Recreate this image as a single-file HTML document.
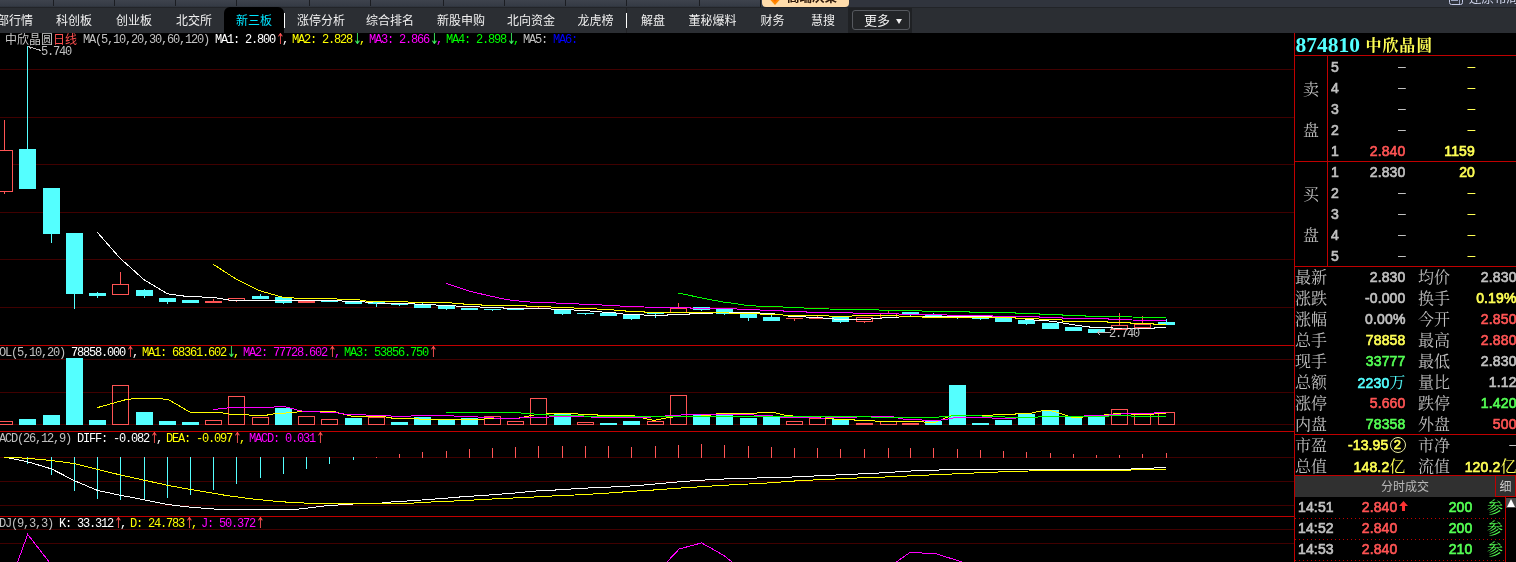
<!DOCTYPE html><html lang="zh-CN"><head><meta charset="utf-8"><title>874810 中欣晶圆</title><style>
html,body{margin:0;padding:0;background:#000;}
body{width:1516px;height:562px;overflow:hidden;position:relative;font-family:"Liberation Sans","Noto Sans CJK SC",sans-serif;}
#wrap{will-change:transform;position:absolute;left:0;top:0;width:1516px;height:562px;overflow:hidden;background:#000;}
.abs{position:absolute;white-space:nowrap;}
#topstrip{position:absolute;left:0;top:0;width:1516px;height:7px;background:#30343d;}
#darkrow{position:absolute;left:0;top:7px;width:1516px;height:1px;background:#222428;}
#topstrip .l{position:absolute;left:0;top:0;width:762px;height:7px;background:linear-gradient(#3e434d,#353b45 85%,#2c3038);}
#topstrip .sep{position:absolute;top:0;width:1px;height:6px;background:#1b1d22;}
#topstrip .btn{position:absolute;left:762px;top:-14px;width:87px;height:21px;background:#ffdcab;border-radius:0 0 4px 4px;color:#111;font-size:13px;line-height:18px;overflow:hidden;}
#tabbar{position:absolute;left:0;top:7px;width:1516px;height:26px;background:#2b2e33;}
.tab{position:absolute;top:7px;height:14px;line-height:14px;font-size:12px;color:#f0f0f0;white-space:nowrap;font-family:"Liberation Sans","Noto Sans CJK SC",sans-serif;}
#acttab{position:absolute;left:224px;top:0px;width:60px;height:26px;background:#000;border-radius:6px 6px 0 0;}
.vsep{position:absolute;top:6px;width:1px;height:15px;background:#fff;}
.mono{font-family:"Liberation Mono","Noto Sans CJK SC",monospace;font-size:12px;letter-spacing:-1.2px;line-height:12px;height:12px;color:#c0c0c0;}
.ss{font-family:"Liberation Mono","Noto Sans CJK SC",monospace;font-size:12px;line-height:12px;letter-spacing:0;}
.arw{width:13px;height:14px;text-align:center;font:15px/14px 'DejaVu Sans',sans-serif;overflow:visible;transform:scaleX(0.7);}
.up{color:#ff3232;} .dn{color:#00e600;}
.ar{display:inline-block;width:5px;letter-spacing:0;font-size:10px;overflow:visible;text-align:center;}
#rp{position:absolute;left:1295px;top:33px;width:221px;height:529px;background:#000;overflow:hidden;}
.rl{position:absolute;left:0;height:1px;width:221px;background:#c00000;}
.num{position:absolute;font-family:"Liberation Sans",sans-serif;font-weight:normal;-webkit-text-stroke:0.65px currentColor;letter-spacing:0.15px;font-size:14px;line-height:16px;height:16px;white-space:nowrap;}
.lab{position:absolute;font-family:"Noto Serif CJK SC","Noto Sans CJK SC",serif;font-size:16px;line-height:16px;height:16px;color:#c0c0c0;white-space:nowrap;font-weight:400;}
.w{color:#c0c0c0;} .y{color:#ffff54;} .r{color:#ff5454;} .g{color:#54ff54;} .c{color:#54ffff;}
.ds{-webkit-text-stroke:0;position:relative;top:-1px;left:0.5px}.cj{-webkit-text-stroke:0;font-family:"Noto Serif CJK SC",serif;font-weight:400;font-size:16px;}.circ{display:inline-block;box-sizing:border-box;width:16px;height:16px;border:1.5px solid #e8e8a0;border-radius:50%;text-align:center;line-height:13px;font-size:13px;vertical-align:top;margin-left:1px}</style></head><body><div id="wrap">
<div id="topstrip"><div class="l"></div>
<div class="sep" style="left:53px"></div>
<div class="sep" style="left:114px"></div>
<div class="sep" style="left:175px"></div>
<div class="sep" style="left:236px"></div>
<div class="sep" style="left:309px"></div>
<div class="sep" style="left:370px"></div>
<div class="sep" style="left:443px"></div>
<div class="sep" style="left:504px"></div>
<div class="sep" style="left:565px"></div>
<div class="sep" style="left:626px"></div>
<div class="sep" style="left:699px"></div>
<div class="btn"><svg class="abs" style="left:8px;top:7.5px" width="10" height="11" viewBox="0 0 10 11"><path d="M5 0L10 5.5L5 11L0 5.5Z" fill="#ff8a00"/><path d="M5 3L7.5 5.5L5 8L2.5 5.5Z" fill="#ff6a00"/></svg><span style="position:absolute;left:25px;top:6px;font-weight:bold;font-size:12.5px;line-height:13px;color:#2a1508">高端决策</span></div>
<div class="abs" style="left:760px;top:0;width:1px;height:7px;background:#15171a"></div>
<div class="abs" style="left:1449px;top:-8.5px;width:13.5px;height:13.8px;border:1.8px solid #c4cbe6;border-radius:2.5px;box-sizing:border-box"></div><div class="abs" style="left:1451px;top:0;width:7px;height:1.2px;background:#9aa2bd"></div><div class="abs" style="left:1459px;top:0;width:1.3px;height:4px;background:#9aa2bd"></div><div class="abs" style="left:1469px;top:-6.6px;font-size:12.5px;line-height:13px;color:#d4daf0">还原布局</div>
</div>
<div id="tabbar"><div id="darkrow" style="top:0"></div><div id="acttab"></div>
<div class="tab" style="left:-15px">全部行情</div>
<div class="tab" style="left:56px">科创板</div>
<div class="tab" style="left:116px">创业板</div>
<div class="tab" style="left:176px">北交所</div>
<div class="tab" style="left:297px">涨停分析</div>
<div class="tab" style="left:366px">综合排名</div>
<div class="tab" style="left:437px">新股申购</div>
<div class="tab" style="left:507px">北向资金</div>
<div class="tab" style="left:577.5px">龙虎榜</div>
<div class="tab" style="left:641px">解盘</div>
<div class="tab" style="left:688.5px">董秘爆料</div>
<div class="tab" style="left:760.5px">财务</div>
<div class="tab" style="left:811px">慧搜</div>
<div class="tab" style="left:236px;color:#00e5ff">新三板</div>
<div class="abs" style="left:626px;top:1px;width:1px;height:25px;background:#222326"></div><div class="vsep" style="left:284px"></div><div class="vsep" style="left:626px"></div>
<div class="abs" style="left:848px;top:1px;width:64px;height:25px;background:#1f2124"></div>
<div class="abs" style="left:852px;top:3px;width:58px;height:20px;box-sizing:border-box;border:1px solid #55585e;border-radius:3px;background:#232528"></div>
<div class="tab" style="left:864px;font-size:13px;top:7px">更多</div><div class="abs" style="left:896px;top:12px;width:0;height:0;border-left:3.5px solid transparent;border-right:3.5px solid transparent;border-top:5px solid #f0f0f0"></div>
</div>
<div class="abs" style="left:0;top:0;width:1295px;height:562px"><svg id="chart" width="1295" height="562" viewBox="0 0 1295 562" shape-rendering="crispEdges">
<rect x="0" y="69" width="1294" height="1" fill="#400000"/>
<rect x="0" y="117" width="1294" height="1" fill="#400000"/>
<rect x="0" y="164" width="1294" height="1" fill="#400000"/>
<rect x="0" y="212" width="1294" height="1" fill="#400000"/>
<rect x="0" y="259" width="1294" height="1" fill="#400000"/>
<rect x="0" y="307" width="1294" height="1" fill="#400000"/>
<rect x="0" y="359" width="1294" height="1" fill="#400000"/>
<rect x="0" y="392" width="1294" height="1" fill="#400000"/>
<rect x="0" y="424" width="1294" height="1" fill="#400000"/>
<rect x="0" y="457" width="1294" height="1" fill="#400000"/>
<rect x="0" y="481" width="1294" height="1" fill="#400000"/>
<rect x="0" y="505" width="1294" height="1" fill="#400000"/>
<rect x="0" y="529" width="1294" height="1" fill="#400000"/>
<rect x="0" y="543" width="1294" height="1" fill="#400000"/>
<rect x="0" y="345" width="1294" height="1" fill="#c00000"/>
<rect x="0" y="431" width="1294" height="1" fill="#c00000"/>
<rect x="0" y="516" width="1294" height="1" fill="#c00000"/>
<rect x="4" y="120" width="1" height="30" fill="#ff5454"/>
<rect x="4" y="192" width="1" height="2" fill="#ff5454"/>
<rect x="-3.5" y="150.5" width="16" height="41" fill="#000" stroke="#ff5454" stroke-width="1"/>
<rect x="27" y="46" width="1" height="143" fill="#54ffff"/>
<rect x="19" y="149" width="17" height="40" fill="#54ffff"/>
<rect x="51" y="188" width="1" height="55" fill="#54ffff"/>
<rect x="43" y="188" width="17" height="46" fill="#54ffff"/>
<rect x="74" y="233" width="1" height="76" fill="#54ffff"/>
<rect x="66" y="233" width="17" height="61" fill="#54ffff"/>
<rect x="97" y="292" width="1" height="6" fill="#54ffff"/>
<rect x="89" y="293" width="17" height="3" fill="#54ffff"/>
<rect x="120" y="272" width="1" height="12" fill="#ff5454"/>
<rect x="112.5" y="284.5" width="16" height="10" fill="#000" stroke="#ff5454" stroke-width="1"/>
<rect x="144" y="289" width="1" height="9" fill="#54ffff"/>
<rect x="136" y="290" width="17" height="6" fill="#54ffff"/>
<rect x="167" y="298" width="1" height="6" fill="#54ffff"/>
<rect x="159" y="298" width="17" height="4" fill="#54ffff"/>
<rect x="182" y="300" width="17" height="3" fill="#54ffff"/>
<rect x="213" y="299" width="1" height="4" fill="#ff5454"/>
<rect x="205" y="301" width="17" height="2" fill="#ff5454"/>
<rect x="236" y="301" width="1" height="1" fill="#ff5454"/>
<rect x="228.5" y="298.5" width="16" height="2" fill="#000" stroke="#ff5454" stroke-width="1"/>
<rect x="260" y="294" width="1" height="5" fill="#54ffff"/>
<rect x="252" y="296" width="17" height="3" fill="#54ffff"/>
<rect x="283" y="297" width="1" height="7" fill="#54ffff"/>
<rect x="275" y="297" width="17" height="6" fill="#54ffff"/>
<rect x="298" y="301" width="17" height="2" fill="#ff5454"/>
<rect x="321" y="301" width="17" height="1" fill="#54ffff"/>
<rect x="345" y="301" width="17" height="3" fill="#54ffff"/>
<rect x="376" y="302" width="1" height="5" fill="#54ffff"/>
<rect x="368" y="302" width="17" height="2" fill="#54ffff"/>
<rect x="399" y="303" width="1" height="3" fill="#54ffff"/>
<rect x="391" y="303" width="17" height="2" fill="#54ffff"/>
<rect x="422" y="302" width="1" height="6" fill="#54ffff"/>
<rect x="414" y="304" width="17" height="4" fill="#54ffff"/>
<rect x="446" y="306" width="1" height="4" fill="#54ffff"/>
<rect x="438" y="306" width="17" height="3" fill="#54ffff"/>
<rect x="461" y="308" width="17" height="2" fill="#54ffff"/>
<rect x="492" y="309" width="1" height="2" fill="#54ffff"/>
<rect x="484" y="309" width="17" height="1" fill="#54ffff"/>
<rect x="507" y="309" width="17" height="1" fill="#54ffff"/>
<rect x="538" y="307" width="1" height="1" fill="#ff5454"/>
<rect x="562" y="310" width="1" height="5" fill="#54ffff"/>
<rect x="554" y="310" width="17" height="4" fill="#54ffff"/>
<rect x="585" y="313" width="1" height="2" fill="#54ffff"/>
<rect x="577" y="313" width="17" height="1" fill="#54ffff"/>
<rect x="600" y="313" width="17" height="3" fill="#54ffff"/>
<rect x="631" y="315" width="1" height="5" fill="#54ffff"/>
<rect x="623" y="315" width="17" height="4" fill="#54ffff"/>
<rect x="655" y="312" width="1" height="6" fill="#54ffff"/>
<rect x="647" y="312" width="17" height="2" fill="#54ffff"/>
<rect x="678" y="303" width="1" height="5" fill="#ff5454"/>
<rect x="670.5" y="308.5" width="16" height="4" fill="#000" stroke="#ff5454" stroke-width="1"/>
<rect x="701" y="307" width="1" height="4" fill="#54ffff"/>
<rect x="693" y="307" width="17" height="3" fill="#54ffff"/>
<rect x="724" y="309" width="1" height="6" fill="#54ffff"/>
<rect x="716" y="309" width="17" height="5" fill="#54ffff"/>
<rect x="748" y="314" width="1" height="7" fill="#54ffff"/>
<rect x="740" y="314" width="17" height="4" fill="#54ffff"/>
<rect x="771" y="315" width="1" height="6" fill="#54ffff"/>
<rect x="763" y="317" width="17" height="4" fill="#54ffff"/>
<rect x="794" y="318" width="1" height="3" fill="#ff5454"/>
<rect x="786" y="318" width="17" height="1" fill="#ff5454"/>
<rect x="817" y="316" width="1" height="3" fill="#ff5454"/>
<rect x="809" y="318" width="17" height="1" fill="#ff5454"/>
<rect x="840" y="317" width="1" height="6" fill="#54ffff"/>
<rect x="832" y="317" width="17" height="5" fill="#54ffff"/>
<rect x="864" y="322" width="1" height="1" fill="#ff5454"/>
<rect x="856.5" y="317.5" width="16" height="4" fill="#000" stroke="#ff5454" stroke-width="1"/>
<rect x="888" y="311" width="1" height="2" fill="#ff5454"/>
<rect x="880.5" y="313.5" width="16" height="4" fill="#000" stroke="#ff5454" stroke-width="1"/>
<rect x="910" y="312" width="1" height="4" fill="#54ffff"/>
<rect x="902" y="312" width="17" height="2" fill="#54ffff"/>
<rect x="933" y="313" width="1" height="3" fill="#54ffff"/>
<rect x="925" y="314" width="17" height="2" fill="#54ffff"/>
<rect x="957" y="317" width="1" height="2" fill="#54ffff"/>
<rect x="949" y="317" width="17" height="1" fill="#54ffff"/>
<rect x="980" y="318" width="1" height="2" fill="#54ffff"/>
<rect x="972" y="318" width="17" height="1" fill="#54ffff"/>
<rect x="995" y="318" width="17" height="4" fill="#54ffff"/>
<rect x="1026" y="320" width="1" height="5" fill="#54ffff"/>
<rect x="1018" y="320" width="17" height="4" fill="#54ffff"/>
<rect x="1042" y="323" width="17" height="6" fill="#54ffff"/>
<rect x="1065" y="327" width="17" height="4" fill="#54ffff"/>
<rect x="1088" y="329" width="17" height="4" fill="#54ffff"/>
<rect x="1119" y="313" width="1" height="12" fill="#ff5454"/>
<rect x="1111.5" y="325.5" width="16" height="4" fill="#000" stroke="#ff5454" stroke-width="1"/>
<rect x="1142" y="316" width="1" height="8" fill="#ff5454"/>
<rect x="1134.5" y="324.5" width="16" height="3" fill="#000" stroke="#ff5454" stroke-width="1"/>
<rect x="1166" y="319" width="1" height="6" fill="#54ffff"/>
<rect x="1158" y="322" width="17" height="3" fill="#54ffff"/>
<polyline points="97.0,232.0 120.4,258.6 144.2,279.8 167.5,293.8 190.0,296.9 201.6,297.0 216.8,297.9 228.4,299.9 233.7,300.8 341.0,300.8 346.0,301.8 363.7,301.8 372.6,303.0 404.7,303.1 417.0,304.2 434.7,304.7 438.3,305.8 455.2,305.8 458.8,306.7 480.0,307.0 481.0,307.7 503.3,307.7 504.2,308.6 550.5,308.6 551.4,309.5 573.6,309.5 574.5,310.6 588.8,310.8 591.5,311.5 601.2,311.8 603.9,312.6 613.7,312.7 626.2,314.5 643.0,314.7 645.0,315.6 666.9,315.6 667.8,314.5 689.2,314.5 690.0,313.6 712.3,313.6 713.2,312.8 759.5,312.8 760.4,313.8 774.7,313.8 775.6,314.5 782.0,314.7 790.7,316.7 805.8,316.7 806.7,317.7 822.8,317.9 824.5,318.8 833.4,318.8 835.2,319.5 870.0,319.5 871.7,318.8 880.6,318.8 882.4,317.7 898.4,317.7 899.3,316.7 922.0,316.5 946.0,316.5 992.0,316.5 1015.0,318.0 1033.9,320.0 1053.0,321.3 1062.6,322.9 1076.0,325.2 1093.2,327.5 1110.4,327.5 1116.1,328.6 1153.4,328.6 1155.4,327.5 1165.9,327.5" fill="none" stroke="#ffffff" stroke-width="1"/>
<polyline points="213.2,264.3 235.5,278.7 259.5,290.6 281.8,297.0 292.5,297.4 295.0,298.3 335.0,298.3 337.0,299.0 346.8,299.3 363.7,300.2 366.4,301.3 406.5,301.7 411.6,302.8 451.6,302.8 452.5,303.5 463.2,303.6 464.0,304.5 481.0,304.5 482.0,305.6 526.4,305.6 527.3,306.7 550.5,306.7 551.4,307.7 573.6,307.7 574.5,308.6 596.8,308.6 597.7,309.5 613.7,309.9 614.6,310.6 625.3,310.8 626.2,311.7 644.0,311.7 644.9,312.6 663.4,312.8 664.2,312.0 712.3,312.0 713.2,312.8 737.0,313.1 759.5,313.5 760.4,314.2 782.7,314.5 783.6,315.6 828.0,315.6 829.9,316.7 851.2,316.7 853.0,315.6 898.4,315.6 899.3,316.5 922.0,316.5 923.0,317.4 1015.0,317.4 1015.7,318.5 1038.7,318.5 1039.6,319.6 1061.6,319.8 1062.6,321.0 1084.6,321.0 1085.5,321.9 1107.5,321.9 1108.5,322.9 1130.5,322.9 1131.4,323.8 1153.4,323.8 1154.4,324.8 1165.9,324.8" fill="none" stroke="#ffff00" stroke-width="1"/>
<polyline points="446.0,283.2 471.2,291.7 506.9,299.7 526.8,301.9 551.4,302.8 573.6,303.8 596.8,304.7 620.0,306.0 644.0,307.0 670.0,307.4 690.0,307.4 691.0,308.3 736.4,308.3 737.3,309.2 759.5,309.5 760.4,310.4 782.7,310.4 783.6,311.3 805.8,311.3 806.7,312.2 852.1,312.2 853.0,313.1 898.4,313.1 899.3,314.2 946.0,314.2 947.0,315.2 991.8,315.2 992.8,316.2 1038.8,316.5 1039.6,317.3 1061.6,317.3 1062.6,318.1 1107.5,318.1 1108.5,319.0 1130.5,319.0 1131.4,320.0 1165.9,320.4" fill="none" stroke="#ff00ff" stroke-width="1"/>
<polyline points="678.1,293.0 701.0,297.8 721.2,301.7 737.3,303.9 745.3,305.3 760.4,306.3 782.7,307.0 805.8,308.1 829.0,309.0 876.2,309.9 899.3,310.8 922.0,310.8 923.0,311.6 969.0,311.6 970.0,312.4 1015.0,312.4 1015.7,313.3 1038.7,313.3 1039.6,314.2 1061.6,314.2 1062.6,315.0 1084.6,315.0 1085.5,316.0 1130.5,316.0 1131.4,317.0 1165.9,317.3" fill="none" stroke="#00ff00" stroke-width="1"/>
<rect x="-3.5" y="421.5" width="16" height="3" fill="none" stroke="#ff5454" stroke-width="1"/>
<rect x="19" y="419" width="17" height="6" fill="#54ffff"/>
<rect x="43" y="415" width="17" height="10" fill="#54ffff"/>
<rect x="66" y="358" width="17" height="67" fill="#54ffff"/>
<rect x="89" y="420" width="17" height="5" fill="#54ffff"/>
<rect x="112.5" y="385.5" width="16" height="39" fill="none" stroke="#ff5454" stroke-width="1"/>
<rect x="136" y="412" width="17" height="13" fill="#54ffff"/>
<rect x="159" y="421" width="17" height="4" fill="#54ffff"/>
<rect x="182" y="422" width="17" height="3" fill="#54ffff"/>
<rect x="205.5" y="420.5" width="16" height="4" fill="none" stroke="#ff5454" stroke-width="1"/>
<rect x="228.5" y="396.5" width="16" height="28" fill="none" stroke="#ff5454" stroke-width="1"/>
<rect x="252.5" y="417.5" width="16" height="7" fill="none" stroke="#ff5454" stroke-width="1"/>
<rect x="275" y="408" width="17" height="17" fill="#54ffff"/>
<rect x="298.5" y="416.5" width="16" height="8" fill="none" stroke="#ff5454" stroke-width="1"/>
<rect x="321.5" y="419.5" width="16" height="5" fill="none" stroke="#ff5454" stroke-width="1"/>
<rect x="345" y="418" width="17" height="7" fill="#54ffff"/>
<rect x="368.5" y="417.5" width="16" height="7" fill="none" stroke="#ff5454" stroke-width="1"/>
<rect x="391" y="422" width="17" height="3" fill="#54ffff"/>
<rect x="414" y="417" width="17" height="8" fill="#54ffff"/>
<rect x="438" y="420" width="17" height="5" fill="#54ffff"/>
<rect x="461" y="418" width="17" height="7" fill="#54ffff"/>
<rect x="484.5" y="416.5" width="16" height="8" fill="none" stroke="#ff5454" stroke-width="1"/>
<rect x="507.5" y="421.5" width="16" height="3" fill="none" stroke="#ff5454" stroke-width="1"/>
<rect x="530.5" y="398.5" width="16" height="26" fill="none" stroke="#ff5454" stroke-width="1"/>
<rect x="554" y="414" width="17" height="11" fill="#54ffff"/>
<rect x="577.5" y="422.5" width="16" height="2" fill="none" stroke="#ff5454" stroke-width="1"/>
<rect x="600" y="423" width="17" height="2" fill="#54ffff"/>
<rect x="623" y="421" width="17" height="4" fill="#54ffff"/>
<rect x="647.5" y="421.5" width="16" height="3" fill="none" stroke="#ff5454" stroke-width="1"/>
<rect x="670.5" y="395.5" width="16" height="29" fill="none" stroke="#ff5454" stroke-width="1"/>
<rect x="693" y="415" width="17" height="10" fill="#54ffff"/>
<rect x="716" y="414" width="17" height="11" fill="#54ffff"/>
<rect x="740" y="418" width="17" height="7" fill="#54ffff"/>
<rect x="763" y="416" width="17" height="9" fill="#54ffff"/>
<rect x="786.5" y="421.5" width="16" height="3" fill="none" stroke="#ff5454" stroke-width="1"/>
<rect x="809.5" y="418.5" width="16" height="6" fill="none" stroke="#ff5454" stroke-width="1"/>
<rect x="832" y="419" width="17" height="6" fill="#54ffff"/>
<rect x="856" y="423" width="17" height="2" fill="#ff5454"/>
<rect x="880.5" y="421.5" width="16" height="3" fill="none" stroke="#ff5454" stroke-width="1"/>
<rect x="902" y="423" width="17" height="2" fill="#ff5454"/>
<rect x="925" y="421" width="17" height="4" fill="#54ffff"/>
<rect x="949" y="385" width="17" height="40" fill="#54ffff"/>
<rect x="972" y="423" width="17" height="2" fill="#54ffff"/>
<rect x="995" y="420" width="17" height="5" fill="#54ffff"/>
<rect x="1018" y="414" width="17" height="11" fill="#54ffff"/>
<rect x="1042" y="410" width="17" height="15" fill="#54ffff"/>
<rect x="1065" y="416" width="17" height="9" fill="#54ffff"/>
<rect x="1088" y="416" width="17" height="9" fill="#54ffff"/>
<rect x="1111.5" y="409.5" width="16" height="15" fill="none" stroke="#ff5454" stroke-width="1"/>
<rect x="1134.5" y="413.5" width="16" height="11" fill="none" stroke="#ff5454" stroke-width="1"/>
<rect x="1158.5" y="412.5" width="16" height="12" fill="none" stroke="#ff5454" stroke-width="1"/>
<polyline points="97.0,407.7 126.7,399.4 138.5,398.4 155.4,398.4 168.2,399.4 190.0,412.2 218.7,412.2 229.6,414.2 245.4,414.2 250.3,415.4 265.2,415.4 277.0,413.4 290.0,412.8 304.8,411.2 332.5,411.2 351.3,416.2 381.0,416.2 394.9,418.6 412.7,418.6 428.5,419.6 480.0,419.6 489.9,418.2 517.6,418.2 535.4,414.8 551.2,413.6 573.0,413.6 580.9,414.3 596.8,414.5 597.8,415.5 633.4,415.5 643.3,418.1 654.2,420.5 665.0,418.1 677.0,416.5 706.7,415.9 718.5,413.5 754.2,413.5 762.0,412.2 773.0,412.2 785.8,415.5 805.6,416.9 822.4,418.1 835.3,419.1 853.0,419.5 857.0,420.9 874.9,421.0 880.0,421.3 922.8,421.3 924.9,422.3 935.4,422.3 951.3,415.4 992.4,415.4 994.5,414.3 1014.6,414.3 1017.8,413.3 1030.4,413.3 1038.9,411.2 1049.4,410.1 1060.0,413.3 1072.6,417.5 1081.0,417.5 1085.3,416.4 1102.2,415.4 1106.4,414.3 1112.7,414.3 1114.9,413.3 1129.6,413.3 1131.7,414.3 1152.8,414.3 1155.0,413.3 1165.5,413.3" fill="none" stroke="#ffff00" stroke-width="1"/>
<polyline points="212.7,409.7 219.7,408.7 229.6,407.7 271.0,407.7 275.0,406.7 285.0,406.7 294.9,409.3 297.9,410.3 305.8,411.8 332.5,412.2 349.4,414.8 382.0,415.2 392.9,416.2 410.7,416.2 412.7,415.2 452.3,415.2 454.3,416.2 483.0,417.2 502.7,418.6 525.5,417.8 547.3,417.2 555.2,416.2 579.0,416.2 590.0,416.9 596.8,417.5 643.3,417.5 667.0,415.9 689.8,414.5 766.0,415.1 783.8,417.5 805.6,417.5 822.4,418.1 876.0,416.4 891.0,416.4 899.6,418.5 908.0,419.6 921.7,419.6 922.8,420.7 935.4,420.7 948.0,419.0 954.4,417.7 991.4,417.7 992.4,418.5 1014.6,418.5 1017.8,417.5 1036.8,417.5 1038.9,416.4 1083.0,416.4 1085.3,415.4 1108.5,415.4 1110.6,414.3 1131.7,413.7 1152.8,413.7 1155.0,412.8 1165.5,412.8" fill="none" stroke="#ff00ff" stroke-width="1"/>
<polyline points="446.3,412.6 520.6,412.6 522.5,413.6 532.4,413.6 535.4,414.6 590.0,416.2 620.0,416.9 870.0,416.9 876.0,417.5 937.5,417.5 940.7,416.4 968.0,415.4 991.4,416.4 1015.6,417.5 1036.8,417.5 1038.9,416.4 1108.5,416.4 1110.6,415.4 1129.6,415.4 1131.7,416.4 1165.5,416.4" fill="none" stroke="#00ff00" stroke-width="1"/>
<rect x="27" y="457" width="1" height="7" fill="#54ffff"/>
<rect x="51" y="457" width="1" height="18" fill="#54ffff"/>
<rect x="74" y="457" width="1" height="34" fill="#54ffff"/>
<rect x="97" y="457" width="1" height="42" fill="#54ffff"/>
<rect x="120" y="457" width="1" height="43" fill="#54ffff"/>
<rect x="144" y="457" width="1" height="43" fill="#54ffff"/>
<rect x="167" y="457" width="1" height="41" fill="#54ffff"/>
<rect x="190" y="457" width="1" height="38" fill="#54ffff"/>
<rect x="213" y="457" width="1" height="33" fill="#54ffff"/>
<rect x="236" y="457" width="1" height="27" fill="#54ffff"/>
<rect x="260" y="457" width="1" height="21" fill="#54ffff"/>
<rect x="283" y="457" width="1" height="17" fill="#54ffff"/>
<rect x="306" y="457" width="1" height="12" fill="#54ffff"/>
<rect x="329" y="457" width="1" height="7" fill="#54ffff"/>
<rect x="353" y="457" width="1" height="3" fill="#54ffff"/>
<rect x="376" y="457" width="1" height="1" fill="#ff5454"/>
<rect x="399" y="454" width="1" height="4" fill="#ff5454"/>
<rect x="422" y="452" width="1" height="6" fill="#ff5454"/>
<rect x="446" y="451" width="1" height="7" fill="#ff5454"/>
<rect x="469" y="449" width="1" height="9" fill="#ff5454"/>
<rect x="492" y="448" width="1" height="10" fill="#ff5454"/>
<rect x="515" y="447" width="1" height="11" fill="#ff5454"/>
<rect x="538" y="446" width="1" height="12" fill="#ff5454"/>
<rect x="562" y="446" width="1" height="12" fill="#ff5454"/>
<rect x="585" y="446" width="1" height="12" fill="#ff5454"/>
<rect x="608" y="446" width="1" height="12" fill="#ff5454"/>
<rect x="631" y="447" width="1" height="11" fill="#ff5454"/>
<rect x="655" y="446" width="1" height="12" fill="#ff5454"/>
<rect x="678" y="445" width="1" height="13" fill="#ff5454"/>
<rect x="701" y="444" width="1" height="14" fill="#ff5454"/>
<rect x="724" y="445" width="1" height="13" fill="#ff5454"/>
<rect x="748" y="446" width="1" height="12" fill="#ff5454"/>
<rect x="771" y="447" width="1" height="11" fill="#ff5454"/>
<rect x="794" y="448" width="1" height="10" fill="#ff5454"/>
<rect x="817" y="448" width="1" height="10" fill="#ff5454"/>
<rect x="840" y="449" width="1" height="9" fill="#ff5454"/>
<rect x="864" y="449" width="1" height="9" fill="#ff5454"/>
<rect x="888" y="448" width="1" height="10" fill="#ff5454"/>
<rect x="910" y="448" width="1" height="10" fill="#ff5454"/>
<rect x="933" y="448" width="1" height="10" fill="#ff5454"/>
<rect x="957" y="449" width="1" height="9" fill="#ff5454"/>
<rect x="980" y="450" width="1" height="8" fill="#ff5454"/>
<rect x="1003" y="451" width="1" height="7" fill="#ff5454"/>
<rect x="1026" y="452" width="1" height="6" fill="#ff5454"/>
<rect x="1050" y="453" width="1" height="5" fill="#ff5454"/>
<rect x="1073" y="454" width="1" height="4" fill="#ff5454"/>
<rect x="1096" y="455" width="1" height="3" fill="#ff5454"/>
<rect x="1119" y="455" width="1" height="3" fill="#ff5454"/>
<rect x="1142" y="454" width="1" height="4" fill="#ff5454"/>
<rect x="1166" y="453" width="1" height="5" fill="#ff5454"/>
<polyline points="4.0,457.0 27.7,461.8 51.5,468.9 74.7,480.8 97.6,490.5 120.6,495.3 144.3,499.8 167.5,504.5 190.5,507.2 213.7,509.0 236.7,509.5 295.0,509.5 310.8,507.7 324.0,506.0 341.0,504.8 358.0,503.7 382.0,503.0 395.0,501.6 411.0,500.8 428.2,499.5 452.0,497.7 463.9,496.6 481.0,495.6 498.2,494.3 516.6,492.9 533.8,491.1 550.9,490.3 568.0,489.2 580.0,488.5 597.0,487.5 619.6,486.7 636.7,485.6 648.6,484.6 660.5,483.5 672.3,482.4 684.2,481.4 696.0,480.6 713.2,479.5 735.7,478.5 783.2,477.4 805.6,476.4 829.3,475.3 851.8,474.3 875.5,473.2 892.7,472.2 904.5,471.4 921.7,470.3 969.2,469.5 1130.5,469.5 1131.5,468.5 1153.5,468.5 1154.5,467.5 1165.9,467.5" fill="none" stroke="#ffffff" stroke-width="1"/>
<polyline points="4.0,457.0 27.7,458.3 51.5,460.5 74.7,463.6 97.6,469.4 120.6,475.0 144.3,480.2 167.5,485.3 190.5,489.5 200.0,491.0 226.4,495.5 252.8,499.0 279.0,501.6 295.0,502.6 318.7,503.7 371.5,503.7 374.0,503.2 411.0,503.2 434.8,501.8 458.6,500.8 479.7,499.7 503.4,498.4 527.2,497.4 545.6,496.3 574.7,495.0 580.0,494.6 597.0,493.8 614.3,492.7 626.2,491.7 643.3,490.6 660.5,489.6 672.3,488.5 689.5,487.5 706.6,486.4 718.5,485.6 735.7,484.6 759.4,483.5 776.6,482.4 788.4,481.4 805.6,480.3 829.3,479.3 851.8,478.2 875.5,477.4 899.3,476.4 921.7,475.3 945.4,474.3 969.2,473.2 991.6,472.3 1016.5,471.2 1060.9,470.5 1130.5,470.5 1131.5,469.5 1165.9,469.5" fill="none" stroke="#ffff00" stroke-width="1"/>
<polyline points="17.2,563.0 27.7,534.4 50.0,563.0" fill="none" stroke="#ff00ff" stroke-width="1"/>
<polyline points="666.0,563.0 679.2,549.0 701.6,542.9 724.0,555.5 733.2,563.0" fill="none" stroke="#ff00ff" stroke-width="1"/>
<polyline points="895.0,563.0 910.0,552.4 920.6,552.4 923.2,553.4 935.0,553.4 965.4,563.0" fill="none" stroke="#ff00ff" stroke-width="1"/>
<path d="M28.5 46.5 L31.5 49.5 M28.5 46.5 L41 50.5" stroke="#c0c0c0" fill="none"/>
<path d="M1097.5 332.5 H1111 M1097.5 332.5 l3 -3 M1097.5 332.5 l3 3" stroke="#c0c0c0" fill="none"/>
<rect x="1294" y="33" width="1" height="529" fill="#c00000"/>
</svg></div>
<div class="abs" style="left:5px;top:33.5px;font:12px/12px 'Liberation Sans','Noto Sans CJK SC',sans-serif;color:#c8c8c8;font-weight:400">中欣晶圆<span style="color:#ff5050">日线</span></div>
<div class="abs mono" style="left:83px;top:33.5px;color:#c0c0c0;">MA(5,10,20,30,60,120)</div>
<div class="abs mono" style="left:215px;top:33.5px;color:#ffffff;">MA1: 2.800</div>
<div class="abs arw" style="left:274px;top:32.0px;color:#ff5454">↑</div>
<div class="abs mono" style="left:282px;top:33.5px;color:#ffffff;">,</div>
<div class="abs mono" style="left:292px;top:33.5px;color:#ffff00;">MA2: 2.828</div>
<div class="abs arw" style="left:351px;top:32.0px;color:#3cf060">↓</div>
<div class="abs mono" style="left:359px;top:33.5px;color:#ffff00;">,</div>
<div class="abs mono" style="left:369px;top:33.5px;color:#ff00ff;">MA3: 2.866</div>
<div class="abs arw" style="left:428px;top:32.0px;color:#3cf060">↓</div>
<div class="abs mono" style="left:436px;top:33.5px;color:#ff00ff;">,</div>
<div class="abs mono" style="left:446px;top:33.5px;color:#00ff00;">MA4: 2.898</div>
<div class="abs arw" style="left:505px;top:32.0px;color:#3cf060">↓</div>
<div class="abs mono" style="left:513px;top:33.5px;color:#00ff00;">,</div>
<div class="abs mono" style="left:523px;top:33.5px;color:#c0c0c0;">MA5:</div>
<div class="abs mono" style="left:553px;top:33.5px;color:#0000ff;">MA6:</div>
<div class="abs mono" style="left:41px;top:46px;color:#c0c0c0;">5.740</div>
<div class="abs mono" style="left:1109px;top:328px;color:#c0c0c0;">2.740</div>
<div class="abs mono" style="left:-7px;top:346.5px;color:#c0c0c0;">VOL(5,10,20)</div>
<div class="abs mono" style="left:71px;top:346.5px;color:#ffffff;">78858.000</div>
<div class="abs arw" style="left:124px;top:345.0px;color:#ff5454">↑</div>
<div class="abs mono" style="left:132px;top:346.5px;color:#ffffff;">,</div>
<div class="abs mono" style="left:142px;top:346.5px;color:#ffff00;">MA1: 68361.602</div>
<div class="abs arw" style="left:225px;top:345.0px;color:#3cf060">↓</div>
<div class="abs mono" style="left:233px;top:346.5px;color:#ffff00;">,</div>
<div class="abs mono" style="left:243px;top:346.5px;color:#ff00ff;">MA2: 77728.602</div>
<div class="abs arw" style="left:326px;top:345.0px;color:#ff5454">↑</div>
<div class="abs mono" style="left:334px;top:346.5px;color:#ff00ff;">,</div>
<div class="abs mono" style="left:344px;top:346.5px;color:#00ff00;">MA3: 53856.750</div>
<div class="abs arw" style="left:427px;top:345.0px;color:#ff5454">↑</div>
<div class="abs mono" style="left:-7px;top:432.5px;color:#c0c0c0;">MACD(26,12,9)</div>
<div class="abs mono" style="left:77px;top:432.5px;color:#ffffff;">DIFF: -0.082</div>
<div class="abs arw" style="left:148px;top:431.0px;color:#ff5454">↑</div>
<div class="abs mono" style="left:156px;top:432.5px;color:#ffffff;">,</div>
<div class="abs mono" style="left:166px;top:432.5px;color:#ffff00;">DEA: -0.097</div>
<div class="abs arw" style="left:231px;top:431.0px;color:#ff5454">↑</div>
<div class="abs mono" style="left:239px;top:432.5px;color:#ffff00;">,</div>
<div class="abs mono" style="left:249px;top:432.5px;color:#ff00ff;">MACD: 0.031</div>
<div class="abs arw" style="left:314px;top:431.0px;color:#ff5454">↑</div>
<div class="abs mono" style="left:-7px;top:517.5px;color:#c0c0c0;">KDJ(9,3,3)</div>
<div class="abs mono" style="left:59px;top:517.5px;color:#ffffff;">K: 33.312</div>
<div class="abs arw" style="left:112px;top:516.0px;color:#ff5454">↑</div>
<div class="abs mono" style="left:120px;top:517.5px;color:#ffffff;">,</div>
<div class="abs mono" style="left:130px;top:517.5px;color:#ffff00;">D: 24.783</div>
<div class="abs arw" style="left:183px;top:516.0px;color:#ff5454">↑</div>
<div class="abs mono" style="left:191px;top:517.5px;color:#ffff00;">,</div>
<div class="abs mono" style="left:201px;top:517.5px;color:#ff00ff;">J: 50.372</div>
<div class="abs arw" style="left:254px;top:516.0px;color:#ff5454">↑</div>
<div id="rp">
<div class="rl" style="top:22px"></div>
<div class="rl" style="top:128px"></div>
<div class="rl" style="top:233px"></div>
<div class="rl" style="top:401px"></div>
<div class="rl" style="top:442px"></div>
<div class="abs" style="left:32px;top:22px;width:1px;height:211px;background:#c00000"></div>
<div class="abs" style="left:0.5px;top:1px;font:bold 21.5px/22px 'Liberation Serif',serif;color:#54ffff">874810</div>
<div class="abs" style="left:70.5px;top:2.5px;font:bold 16px/18px 'Noto Serif CJK SC',serif;letter-spacing:0.9px;color:#ffff54">中欣晶圆</div>
<div class="num w" style="left:36px;top:25.5px">5</div>
<div class="num w" style="right:110.5px;top:25.5px"><span class="ds">–</span></div>
<div class="num y" style="right:41px;top:25.5px"><span class="ds">–</span></div>
<div class="num w" style="left:36px;top:46.5px">4</div>
<div class="num w" style="right:110.5px;top:46.5px"><span class="ds">–</span></div>
<div class="num y" style="right:41px;top:46.5px"><span class="ds">–</span></div>
<div class="num w" style="left:36px;top:67.5px">3</div>
<div class="num w" style="right:110.5px;top:67.5px"><span class="ds">–</span></div>
<div class="num y" style="right:41px;top:67.5px"><span class="ds">–</span></div>
<div class="num w" style="left:36px;top:88.5px">2</div>
<div class="num w" style="right:110.5px;top:88.5px"><span class="ds">–</span></div>
<div class="num y" style="right:41px;top:88.5px"><span class="ds">–</span></div>
<div class="num w" style="left:36px;top:109.5px">1</div>
<div class="num r" style="right:110.5px;top:109.5px">2.840</div>
<div class="num y" style="right:41px;top:109.5px">1159</div>
<div class="num w" style="left:36px;top:130.5px">1</div>
<div class="num w" style="right:110.5px;top:130.5px">2.830</div>
<div class="num y" style="right:41px;top:130.5px">20</div>
<div class="num w" style="left:36px;top:151.5px">2</div>
<div class="num w" style="right:110.5px;top:151.5px"><span class="ds">–</span></div>
<div class="num y" style="right:41px;top:151.5px"><span class="ds">–</span></div>
<div class="num w" style="left:36px;top:172.5px">3</div>
<div class="num w" style="right:110.5px;top:172.5px"><span class="ds">–</span></div>
<div class="num y" style="right:41px;top:172.5px"><span class="ds">–</span></div>
<div class="num w" style="left:36px;top:193.5px">4</div>
<div class="num w" style="right:110.5px;top:193.5px"><span class="ds">–</span></div>
<div class="num y" style="right:41px;top:193.5px"><span class="ds">–</span></div>
<div class="num w" style="left:36px;top:214.5px">5</div>
<div class="num w" style="right:110.5px;top:214.5px"><span class="ds">–</span></div>
<div class="num y" style="right:41px;top:214.5px"><span class="ds">–</span></div>
<div class="lab " style="left:8px;top:47.5px">卖</div>
<div class="lab " style="left:8px;top:88.5px">盘</div>
<div class="lab " style="left:8px;top:152.5px">买</div>
<div class="lab " style="left:8px;top:194.0px">盘</div>
<div class="lab " style="left:0px;top:235.5px">最新</div>
<div class="num w" style="right:110.5px;top:235.5px">2.830</div>
<div class="lab " style="left:123px;top:235.5px">均价</div>
<div class="num w" style="right:-0.599999999999909px;top:235.5px">2.830</div>
<div class="lab " style="left:0px;top:256.5px">涨跌</div>
<div class="num w" style="right:110.5px;top:256.5px">-0.000</div>
<div class="lab " style="left:123px;top:256.5px">换手</div>
<div class="num y" style="right:-0.599999999999909px;top:256.5px">0.19%</div>
<div class="lab " style="left:0px;top:277.5px">涨幅</div>
<div class="num w" style="right:110.5px;top:277.5px">0.00%</div>
<div class="lab " style="left:123px;top:277.5px">今开</div>
<div class="num r" style="right:-0.599999999999909px;top:277.5px">2.850</div>
<div class="lab " style="left:0px;top:298.5px">总手</div>
<div class="num y" style="right:110.5px;top:298.5px">78858</div>
<div class="lab " style="left:123px;top:298.5px">最高</div>
<div class="num r" style="right:-0.599999999999909px;top:298.5px">2.880</div>
<div class="lab " style="left:0px;top:319.5px">现手</div>
<div class="num g" style="right:110.5px;top:319.5px">33777</div>
<div class="lab " style="left:123px;top:319.5px">最低</div>
<div class="num w" style="right:-0.599999999999909px;top:319.5px">2.830</div>
<div class="lab " style="left:0px;top:340.5px">总额</div>
<div class="num c" style="right:110.5px;top:340.5px">2230<span class="cj">万</span></div>
<div class="lab " style="left:123px;top:340.5px">量比</div>
<div class="num w" style="right:-0.599999999999909px;top:340.5px">1.12</div>
<div class="lab " style="left:0px;top:361.5px">涨停</div>
<div class="num r" style="right:110.5px;top:361.5px">5.660</div>
<div class="lab " style="left:123px;top:361.5px">跌停</div>
<div class="num g" style="right:-0.599999999999909px;top:361.5px">1.420</div>
<div class="lab " style="left:0px;top:382.5px">内盘</div>
<div class="num g" style="right:110.5px;top:382.5px">78358</div>
<div class="lab " style="left:123px;top:382.5px">外盘</div>
<div class="num r" style="right:-0.599999999999909px;top:382.5px">500</div>
<div class="lab " style="left:0px;top:403.5px">市盈</div>
<div class="num y" style="right:110.5px;top:403.5px">-13.95<span class="circ">2</span></div>
<div class="lab " style="left:123px;top:403.5px">市净</div>
<div class="num w" style="right:-0.599999999999909px;top:403.5px"><span class="ds">–</span></div>
<div class="lab " style="left:0px;top:424.5px">总值</div>
<div class="num y" style="right:110.5px;top:424.5px">148.2<span class="cj">亿</span></div>
<div class="lab " style="left:123px;top:424.5px">流值</div>
<div class="num y" style="right:-0.599999999999909px;top:424.5px">120.2<span class="cj">亿</span></div>
<div class="abs" style="left:0;top:443px;width:200px;height:21px;background:#303030"></div>
<div class="abs" style="left:200px;top:442px;width:21px;height:22px;box-sizing:border-box;border:1px solid #c00000;background:#303030"></div>
<div class="abs" style="left:86px;top:447.5px;font:12px/12px 'Liberation Sans','Noto Sans CJK SC',sans-serif;color:#b8b8b8">分时成交</div>
<div class="abs" style="left:204.5px;top:447.5px;font:12px/12px 'Liberation Sans','Noto Sans CJK SC',sans-serif;color:#c8c8c8">细</div>
<div class="abs" style="left:210px;top:464px;width:1px;height:70px;background:#c00000"></div>
<div class="abs" style="left:211px;top:465px;width:10px;height:10px;background:#4a4a4a"></div>
<div class="abs" style="left:212px;top:466px;width:0;height:0;border-left:4.5px solid transparent;border-right:4.5px solid transparent;border-bottom:8px solid #fff"></div>
<div class="num w" style="left:3px;top:465.5px">14:51</div>
<div class="num r" style="right:118.5px;top:465.5px">2.840</div>
<svg class="abs" style="left:104px;top:468px" width="9" height="10" viewBox="0 0 9 10"><path d="M4.5 0L9 5H6V10H3V5H0Z" fill="#ff3232"/></svg>
<div class="num g" style="right:43.5px;top:465.5px">200</div>
<div class="lab g" style="left:192px;top:465.5px">参</div>
<div class="num w" style="left:3px;top:486.5px">14:52</div>
<div class="num r" style="right:118.5px;top:486.5px">2.840</div>
<div class="num g" style="right:43.5px;top:486.5px">200</div>
<div class="lab g" style="left:192px;top:486.5px">参</div>
<div class="num w" style="left:3px;top:507.5px">14:53</div>
<div class="num r" style="right:118.5px;top:507.5px">2.840</div>
<div class="num g" style="right:43.5px;top:507.5px">210</div>
<div class="lab g" style="left:192px;top:507.5px">参</div>
<div class="abs" style="left:0px;top:485px;width:209px;height:1px;background:repeating-linear-gradient(90deg,#c00000 0,#c00000 1px,transparent 1px,transparent 4px)"></div>
<div class="abs" style="left:0px;top:506px;width:209px;height:1px;background:repeating-linear-gradient(90deg,#c00000 0,#c00000 1px,transparent 1px,transparent 4px)"></div>
<div class="abs" style="left:0px;top:527px;width:209px;height:1px;background:repeating-linear-gradient(90deg,#c00000 0,#c00000 1px,transparent 1px,transparent 4px)"></div>
</div>
</div></body></html>
